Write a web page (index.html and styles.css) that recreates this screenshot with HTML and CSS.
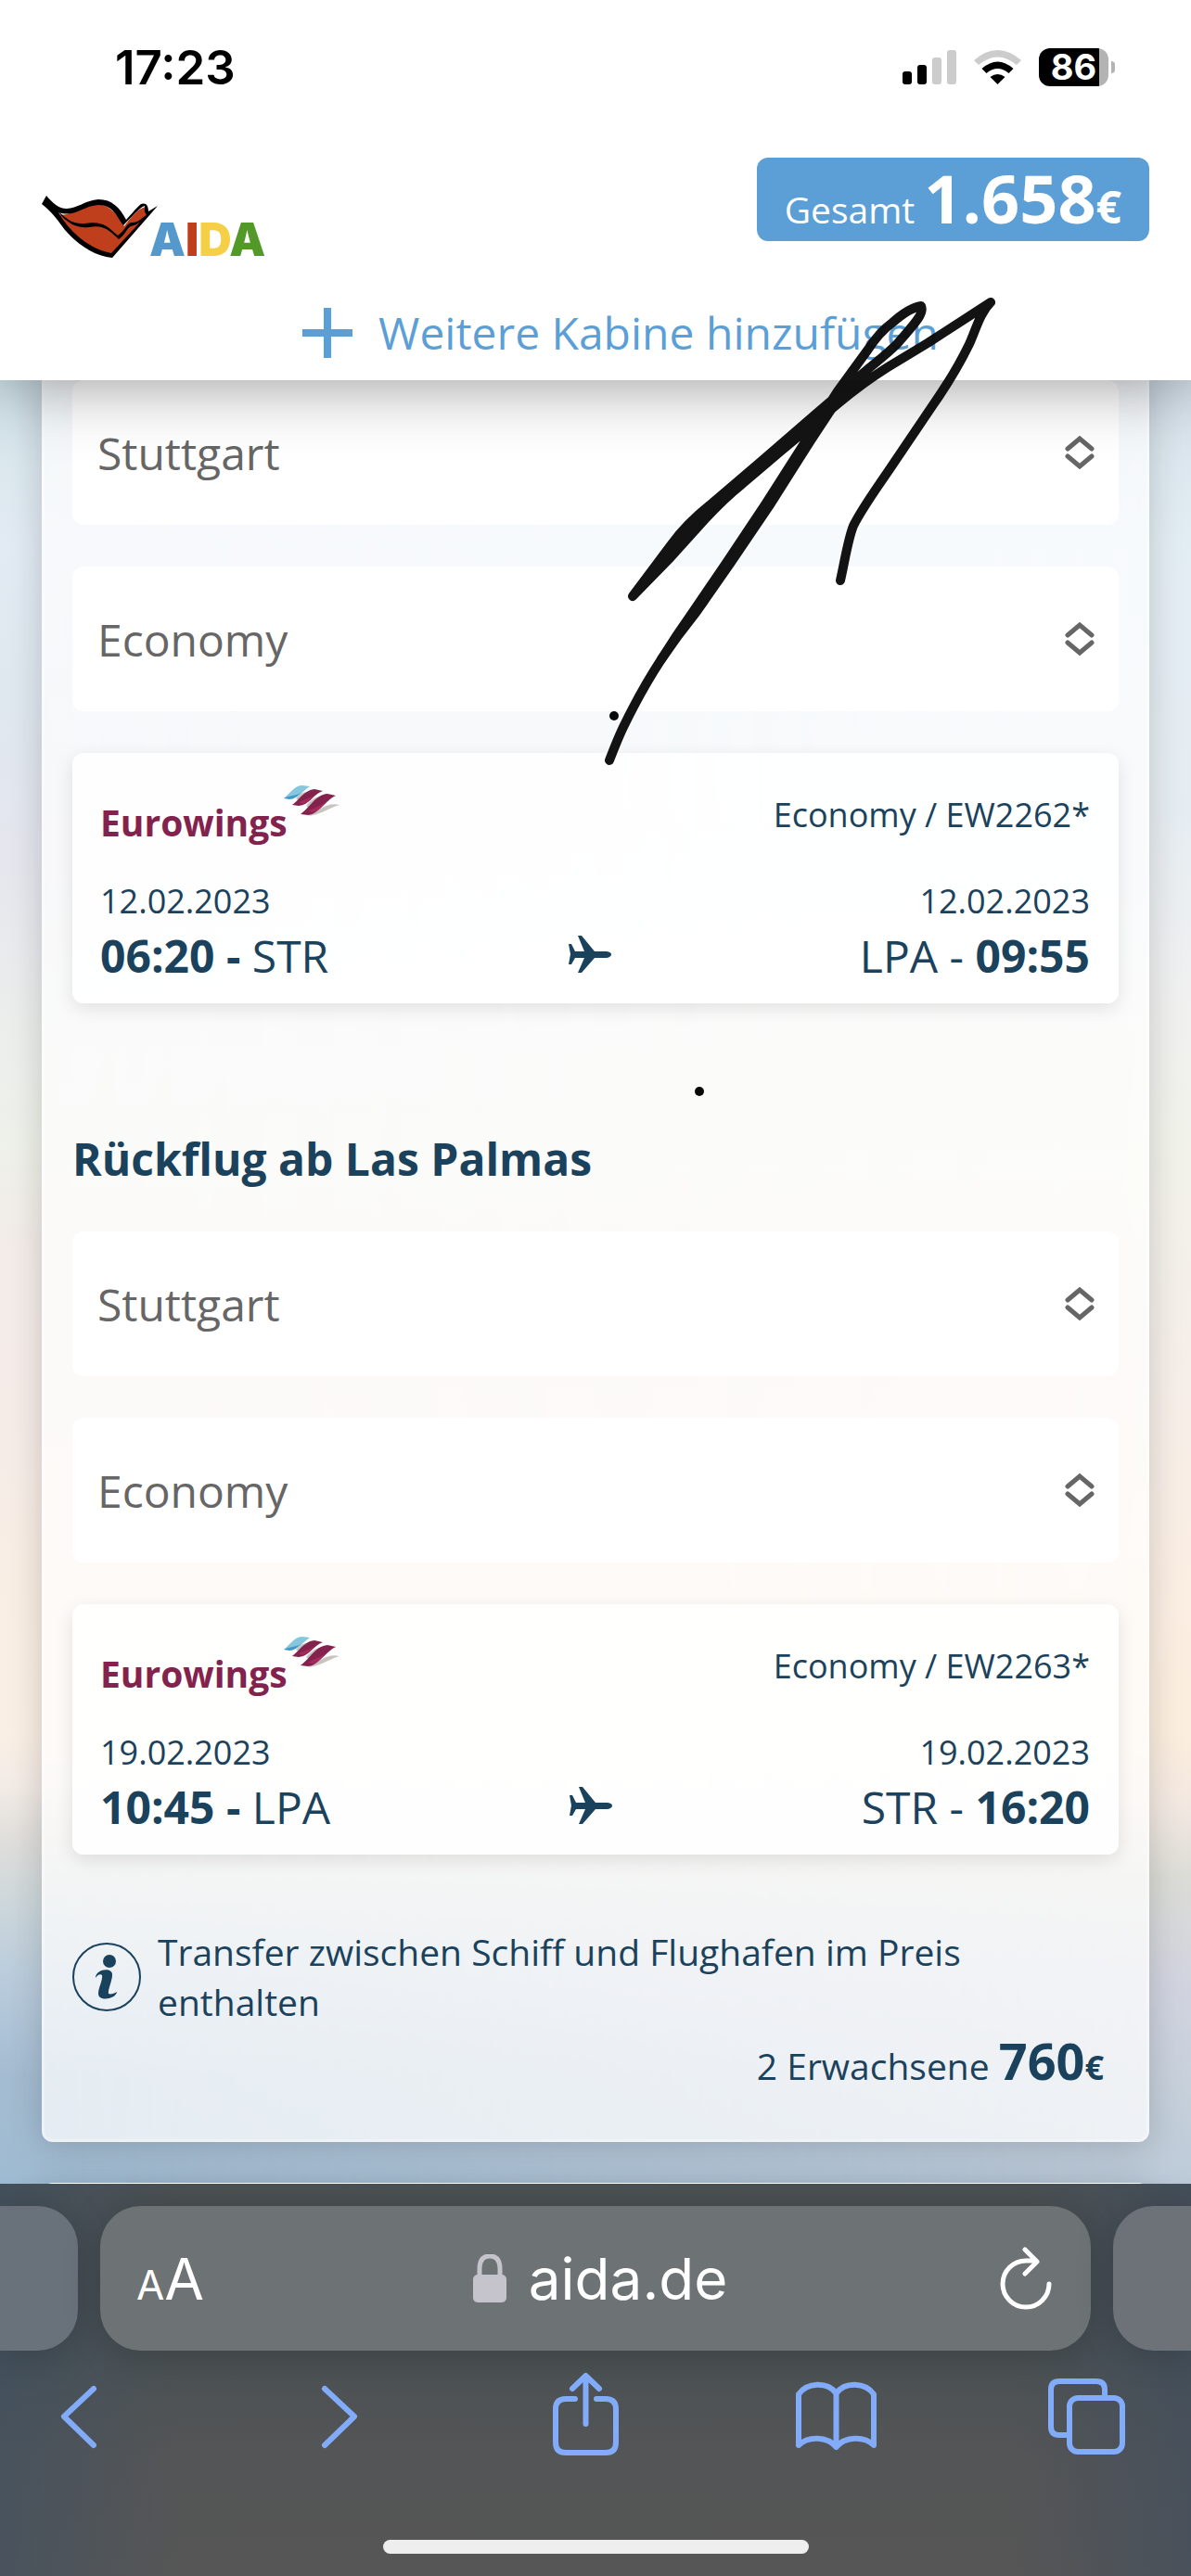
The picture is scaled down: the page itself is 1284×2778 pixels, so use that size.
FILE: index.html
```html
<!DOCTYPE html>
<html lang="de">
<head>
    <meta charset="UTF-8">
    <meta name="viewport" content="width=device-width, initial-scale=1.0">
    <title>AIDA - Flugauswahl</title>
    <link rel="stylesheet" href="styles.css">
</head>
<body>
    <header class="header">
        <div class="status-bar">
            <span class="time">17:23</span>
            <div class="status-icons">
                <svg width="58" height="37" viewBox="0 0 58 37">
                    <rect x="0" y="23" width="10" height="14" rx="3"/>
                    <rect x="16" y="16" width="10" height="21" rx="3"/>
                    <rect x="32" y="8" width="10" height="29" rx="3" fill="#ccc"/>
                    <rect x="48" y="0" width="10" height="37" rx="3" fill="#ccc"/>
                </svg>
                <svg width="51" height="37" viewBox="0 0 51 37">
                    <path d="M0 11 Q25.500 -11 51 11 L46 16 Q25.500 -1 5 16 Z" fill="#ccc"/>
                    <path d="M8.500 20 Q25.500 5 42.500 20 L37.500 25 Q25.500 15 13.500 25 Z"/>
                    <path d="M17.500 29 Q25.500 23 33.500 29 L25.500 37 Z"/>
                </svg>
                <div class="battery"><span class="battery-level">86</span><span class="battery-cap"></span></div>
            </div>
        </div>

        <div class="brand-row">
            <a class="logo" href="#" aria-label="AIDA">
                <svg width="126" height="68" viewBox="0 0 126 68">
                    <path d="M2 8 C18 30 30 18 44 13 C66 2 79 16 89 33 C97 22 104 14 112 12 L114 19 L123 12 C107 31 90 51 76 65 C50 60 26 36 2 8 Z" fill="#bf3f1d"/>
                    <path d="M5 0 L0 9 C12 18 18 28 25 37 C38 52 56 65 76 67 L125 11 L115 17 C115 10 112 7 107 9 C101 14 95 22 91 26 C84 13 76 4 61 4 C47 5 38 14 27 14 C18 14 12 8 5 0 Z M18 18 C36 24 44 11 61 10 C77 10 81 23 88 32 C98 22 105 13 111 11 C111 15 110 17 113 21 L75 62 C50 57 30 39 18 18 Z" fill-rule="evenodd"/>
                    <path d="M14 13 C26 25 33 31 46 30 C65 27 70 32 82 43 C89 38 91 31 96 29 C104 30 109 23 115 19 C110 25 104 32 96 33 C91 36 91 41 83 47 C72 36 65 31 51 34 C34 36 24 26 14 13 Z"/>
                </svg>
                <span class="logo-text"><span class="blue">A</span><span class="red">I</span><span class="yellow">D</span><span class="green">A</span></span>
            </a>
            <div class="total">Gesamt <span class="total-amount">1.658</span><span class="total-currency">€</span></div>
        </div>

        <a class="add-cabin" href="#">
            <svg width="54" height="54" viewBox="0 0 54 54" stroke="#5b9fd6" stroke-width="8">
                <path d="M27 0 V54 M0 27 H54"/>
            </svg>
            Weitere Kabine hinzufügen
        </a>
    </header>

    <main class="content">
        <section class="panel">
            <div class="select-box">
                <select aria-label="Abflughafen Hinflug"><option>Stuttgart</option></select>
                <svg class="arrows" width="32" height="36" viewBox="0 0 32 36"><path d="M3 14 L16 3 L29 14 M3 22 L16 33 L29 22"/></svg>
            </div>
            <div class="select-box">
                <select aria-label="Klasse Hinflug"><option>Economy</option></select>
                <svg class="arrows" width="32" height="36" viewBox="0 0 32 36"><path d="M3 14 L16 3 L29 14 M3 22 L16 33 L29 22"/></svg>
            </div>
            <article class="flight">
                <div class="flight-top">
                    <div class="airline">
                        <span>Eurowings</span>
                        <svg width="60" height="34" viewBox="0 0 60 34">
                            <path d="M13 14 C20 5 28 7 35 6 L20 20 Z M24 22 C34 10 40 12 48 10 L30 27 Z M26 33 C42 23 49 18 60 21 C47 25 39 32 26 33 Z" fill="#c8c4c0"/>
                            <path d="M0 14 C7 8 12 0 20 0 L28 1 C19 7 17 13 8 14 Z" fill="#86c7de"/>
                            <path d="M0 14 C7 10 12 12 18 8 C14 12 11 15 6 15 Z" fill="#4199c9"/>
                            <path d="M9 21 C16 16 22 5 33 4 L42 6 C31 10 28 21 16 22 Z M18 31 C28 24 34 10 47 9 L56 11 C45 16 36 32 26 32 Z" fill="#83234d"/>
                            <path d="M16 18 C23 15 31 13 37 8 C31 12 27 19 20 20 Z M26 28 C34 23 43 21 50 15 C43 20 37 29 31 29 Z" fill="#a52a5c"/>
                        </svg>
                    </div>
                    <span class="small">Economy / EW2262*</span>
                </div>
                <div class="flight-row small"><span>12.02.2023</span><span>12.02.2023</span></div>
                <div class="flight-row times">
                    <span><b>06:20 -</b> STR</span>
                    <svg width="56" height="46" viewBox="0 0 56 46"><path d="M0 10 H3 L7 18 H17 L10 1 H14 L28 18 H41 Q46 19 46 21 Q46 24 41 25 H28 L14 41 H10 L17 25 H7 L3 32 H0 L2 21 Z"/></svg>
                    <span>LPA - <b>09:55</b></span>
                </div>
            </article>

            <h2>Rückflug ab Las Palmas</h2>
            <div class="select-box">
                <select aria-label="Zielflughafen Rückflug"><option>Stuttgart</option></select>
                <svg class="arrows" width="32" height="36" viewBox="0 0 32 36"><path d="M3 14 L16 3 L29 14 M3 22 L16 33 L29 22"/></svg>
            </div>
            <div class="select-box">
                <select aria-label="Klasse Rückflug"><option>Economy</option></select>
                <svg class="arrows" width="32" height="36" viewBox="0 0 32 36"><path d="M3 14 L16 3 L29 14 M3 22 L16 33 L29 22"/></svg>
            </div>
            <article class="flight">
                <div class="flight-top">
                    <div class="airline">
                        <span>Eurowings</span>
                        <svg width="60" height="34" viewBox="0 0 60 34">
                            <path d="M13 14 C20 5 28 7 35 6 L20 20 Z M24 22 C34 10 40 12 48 10 L30 27 Z M26 33 C42 23 49 18 60 21 C47 25 39 32 26 33 Z" fill="#c8c4c0"/>
                            <path d="M0 14 C7 8 12 0 20 0 L28 1 C19 7 17 13 8 14 Z" fill="#86c7de"/>
                            <path d="M0 14 C7 10 12 12 18 8 C14 12 11 15 6 15 Z" fill="#4199c9"/>
                            <path d="M9 21 C16 16 22 5 33 4 L42 6 C31 10 28 21 16 22 Z M18 31 C28 24 34 10 47 9 L56 11 C45 16 36 32 26 32 Z" fill="#83234d"/>
                            <path d="M16 18 C23 15 31 13 37 8 C31 12 27 19 20 20 Z M26 28 C34 23 43 21 50 15 C43 20 37 29 31 29 Z" fill="#a52a5c"/>
                        </svg>
                    </div>
                    <span class="small">Economy / EW2263*</span>
                </div>
                <div class="flight-row small"><span>19.02.2023</span><span>19.02.2023</span></div>
                <div class="flight-row times">
                    <span><b>10:45 -</b> LPA</span>
                    <svg width="56" height="46" viewBox="0 0 56 46"><path d="M0 10 H3 L7 18 H17 L10 1 H14 L28 18 H41 Q46 19 46 21 Q46 24 41 25 H28 L14 41 H10 L17 25 H7 L3 32 H0 L2 21 Z"/></svg>
                    <span>STR - <b>16:20</b></span>
                </div>
            </article>

            <div class="info">
                <svg width="74" height="74" viewBox="0 0 74 74">
                    <circle cx="37" cy="37" r="36" fill="none" stroke="#1b425c" stroke-width="2"/>
                    <circle cx="40" cy="20" r="7"/>
                    <path d="M25 38 C25 28 44 26 43 35 C43 41 38 51 39 55 C41 56 45 55 48 53 C47 61 28 64 28 55 C28 49 33 40 32 35 C30 33 27 35 25 38 Z"/>
                </svg>
                <p>Transfer zwischen Schiff und Flughafen im Preis enthalten</p>
            </div>
            <div class="price">2 Erwachsene <span class="amount">760</span><span class="currency">€</span></div>
        </section>
        <section class="panel panel-next"></section>
    </main>

    <footer class="toolbar">
        <div class="tabs">
            <div class="tab tab-left"></div>
            <div class="tab address">
                <button class="text-size" aria-label="Textgröße"><span>A</span>A</button>
                <div class="domain">
                    <svg width="36" height="52" viewBox="0 0 36 52">
                        <rect x="0" y="22" width="36" height="30" rx="5" fill="#c5c4cd"/>
                        <path d="M7 25 V16 Q7 2 18 2 Q29 2 29 16 V25" fill="none" stroke="#c5c4cd" stroke-width="5"/>
                    </svg>
                    <span>aida.de</span>
                </div>
                <button aria-label="Neu laden">
                    <svg width="56" height="68" viewBox="0 0 56 68" fill="none" stroke="#fff" stroke-width="5" stroke-linecap="round" stroke-linejoin="round">
                        <path d="M53 40 A25 25 0 1 1 28 15 H39 M27 3 L40 16 L27 29"/>
                    </svg>
                </button>
            </div>
            <div class="tab tab-right"></div>
        </div>
        <nav class="nav">
            <button aria-label="Zurück"><svg viewBox="0 0 100 100"><path d="M66 21 L34 51 L66 82"/></svg></button>
            <button aria-label="Vor"><svg viewBox="0 0 100 100"><path d="M43 21 L75 51 L43 82"/></svg></button>
            <button aria-label="Teilen"><svg viewBox="0 0 100 100"><path d="M41 32 H31 Q20 32 20 43 V79 Q20 90 31 90 H74 Q85 90 85 79 V43 Q85 32 74 32 H64 M52.500 59 V8 M38 21 L52.500 7 L67 21"/></svg></button>
            <button aria-label="Lesezeichen"><svg viewBox="0 0 100 100"><path d="M11 82 V27 C20 14 42 13 51.500 26 C61 13 83 14 92 27 V82 C82 72 61 72 51.500 84 C42 72 21 72 11 82 M51.500 26 V84"/></svg></button>
            <button aria-label="Tabs"><svg viewBox="0 0 100 100"><rect x="31" y="31" width="57" height="58" rx="9"/><path d="M29 71 H20 Q11 71 11 62 V22 Q11 13 20 13 H60 Q69 13 69 22 V30"/></svg></button>
        </nav>
        <div class="home-indicator"></div>
    </footer>

    <!-- hand drawn marking -->
    <svg class="scribble" width="430" height="880" viewBox="650 310 430 880">
        <path d="M657 820 C662 807 667 794 673 782 Q692 743 713 711 Q730 684 747 660 L783 607 L825 544 L871 472 L903 422 L935 378 Q948 358 962 348 Q980 332 993 330 C997 338 985 350 967 371 C951 387 940 393 922 410 L880 446 L820 498 L765 545 Q740 565 724 587 L682 643 L723 601 L760 560 Q780 538 800 522 L840 488 L905 434 Q930 413 957 396 L1000 370 L1068 326 C1056 338 1052 356 1045 371 Q1030 402 1007 435 L957 509 C940 534 929 549 920 567 C914 582 911 604 906 626"/>
        <path d="M713 711 Q730 686 750 661 L787 608 L829 546 L874 475 L905 428 M765 548 L820 503 L880 451 L912 422"/>
        <circle cx="662" cy="772" r="5"/>
        <circle cx="754" cy="1177" r="5"/>
    </svg>
</body>
</html>
```
FILE: styles.css
```css
* {
    box-sizing: border-box;
}
body {
    font-family: "Open Sans", sans-serif;
    margin: 0;
    height: 100vh;
    display: flex;
    flex-direction: column;
    position: relative;
    overflow: hidden;
    color: #1b425c;
}
button {
    padding: 0;
    border: none;
    background: none;
    color: white;
    cursor: pointer;
}
svg {
    display: block;
    flex-shrink: 0;
}
a {
    text-decoration: none;
}

/* header */
.header {
    background-color: #fff;
    position: relative;
    z-index: 2;
    padding-bottom: 19px;
    flex-shrink: 0;
    box-shadow: 0 0 72px rgba(0, 0, 0, 0.44);
}
.status-bar {
    display: flex;
    justify-content: space-between;
    align-items: center;
    height: 145px;
    padding: 0 82px 0 124px;
    font-family: Inter, sans-serif;
    color: #000;
}
.time {
    font-size: 51px;
    font-weight: 600;
}
.status-icons {
    display: flex;
    align-items: center;
    gap: 19px;
}
.battery {
    display: flex;
    align-items: center;
    gap: 3px;
}
.battery-level {
    width: 75px;
    height: 41px;
    line-height: 41px;
    border-radius: 12px;
    background: linear-gradient(to right, #000 65px, #b3b3b3 65px);
    color: white;
    font-size: 38px;
    font-weight: 700;
    text-align: center;
}
.battery-cap {
    width: 4px;
    height: 13px;
    border-radius: 0 4px 4px 0;
    background-color: #b3b3b3;
}
.brand-row {
    display: flex;
    justify-content: space-between;
    align-items: flex-start;
    padding: 25px 45px 0;
}
.logo {
    display: flex;
    align-items: flex-end;
    margin-top: 41px;
}
.logo-text {
    margin-left: -10px;
    font-family: Inter, sans-serif;
    font-size: 49px;
    font-weight: 900;
    line-height: 41px;
}
.blue { color: #5599cc; }
.red { color: #bf3f1d; }
.yellow { color: #f5cf45; }
.green { color: #53992a; }
.total {
    height: 90px;
    padding: 0 30px;
    line-height: 86px;
    border-radius: 12px;
    background-color: #5b9fd6;
    color: white;
    font-size: 39px;
}
.total-amount {
    font-size: 72px;
    font-weight: bold;
}
.total-currency {
    font-size: 48px;
    font-weight: bold;
}
.add-cabin {
    display: flex;
    justify-content: center;
    align-items: center;
    gap: 28px;
    margin-top: 48px;
    padding-left: 54px;
    color: #5b9fd6;
    font-size: 48px;
    line-height: 64px;
}

/* flight selection */
.content {
    flex: 1;
    min-height: 0;
    overflow: hidden;
    position: relative;
    padding: 0 45px;
    background: linear-gradient(#cfe1e9, #dce8ee 5%, #e2eaf3 9%, #dfe8ef 17%, #e5e6ee 26%, #eceeec 36%, #eef1ea 42%, #f3ece9 48%, #f5ece8 58%, #f9eee4 67%, #faefe5 75%, #f2ebe6 78%, #dfdedb 81%, #cfd8db 84%, #b8cbdc 89%, #a4bcd1 94%, #9fbbd2);
}
/* lighter right hand side of the sky */
.content::before {
    content: "";
    position: absolute;
    inset: 0;
    background: linear-gradient(#d5e0ea, #e2edf3 9%, #e6edf2 24%, #f0f0f0 34%, #f1f2ea 42%, #f6eee8 56%, #fbeee2 68%, #fbeedd 75%, #f3e8e1 79%, #dbdcd6 83%, #d1d3df 89%, #c8d1db 94%, #bccad8);
    mask-image: linear-gradient(to right, transparent, #000);
}
.panel {
    position: relative;
    padding: 0 30px 49px;
    border: 3px solid rgba(255, 255, 255, 0.3);
    border-top: none;
    border-radius: 0 0 12px 12px;
    background-color: rgba(255, 255, 255, 0.72);
    box-shadow: 0 4px 36px rgba(0, 0, 0, 0.18);
}
.panel-next {
    margin-top: 44px;
    border-top: 3px solid #fff;
    border-radius: 12px;
}
.select-box {
    position: relative;
    margin-bottom: 45px;
}
.select-box select {
    display: block;
    width: 100%;
    height: 156px;
    padding: 0 27px;
    border: none;
    border-radius: 12px;
    background-color: #fff;
    color: #666;
    font-family: inherit;
    font-size: 48px;
    appearance: none;
}
.arrows {
    position: absolute;
    right: 26px;
    top: 60px;
    fill: none;
    stroke: #666;
    stroke-width: 5;
    stroke-linecap: round;
}
.flight {
    padding: 35px 31px 19px 30px;
    border-radius: 12px;
    background-color: rgba(255, 255, 255, 0.85);
    box-shadow: 0 6px 20px rgba(0, 0, 0, 0.1);
}
.flight-top {
    display: flex;
    justify-content: space-between;
    align-items: center;
    height: 64px;
    margin-bottom: 34px;
}
.airline {
    display: flex;
    align-items: flex-start;
    height: 64px;
    color: #83234d;
    font-size: 39px;
    font-weight: bold;
}
.airline span {
    margin-right: -4px;
    line-height: 80px;
}
.small {
    font-size: 36px;
    line-height: 54px;
}
.flight-row {
    display: flex;
    justify-content: space-between;
}
.times {
    align-items: center;
    font-size: 48px;
    line-height: 64px;
}
.times svg, .info svg {
    fill: #1b425c;
}
h2 {
    margin: 136px 0 46px;
    font-size: 48px;
    line-height: 64px;
}
.info {
    display: flex;
    align-items: center;
    gap: 18px;
    margin-top: 78px;
}
.info p {
    margin: 0;
    font-size: 39px;
    line-height: 54px;
}
.price {
    height: 72px;
    padding-right: 16px;
    font-size: 39px;
    line-height: 72px;
    text-align: right;
}
.amount {
    font-size: 54px;
    font-weight: bold;
}
.currency {
    font-size: 36px;
    font-weight: bold;
}

/* browser toolbar */
.toolbar {
    position: relative;
    flex-shrink: 0;
    padding: 24px 0;
    background: linear-gradient(to right, rgba(60, 80, 100, 0.5), transparent 15%, transparent 85%, rgba(60, 76, 96, 0.5)), linear-gradient(#4c5153, #4b5153 45%, #545556 70%, #565656);
}
.tabs {
    display: flex;
    gap: 24px;
    height: 156px;
}
.tab {
    background-color: #6d7275;
    box-shadow: 0 4px 40px rgba(0, 0, 0, 0.2);
}
.tab-left {
    width: 84px;
    border-radius: 0 44px 44px 0;
    background-color: #69717a;
}
.tab-right {
    width: 84px;
    border-radius: 44px 0 0 44px;
    background-color: #6d7178;
}
.address {
    flex: 1;
    display: flex;
    justify-content: space-between;
    align-items: center;
    padding: 0 42px 0 39px;
    border-radius: 44px;
    color: white;
    font-family: Inter, sans-serif;
}
.text-size {
    font-family: Inter, sans-serif;
    font-size: 62px;
}
.text-size span {
    font-size: 44px;
}
.domain {
    display: flex;
    align-items: center;
    gap: 24px;
    padding-right: 4px;
    font-size: 62px;
}
.nav {
    display: flex;
    justify-content: space-between;
    padding: 20px 62px 0 35px;
}
.nav svg {
    width: 100px;
    height: 100px;
    fill: none;
    stroke: #82abfa;
    stroke-width: 6;
    stroke-linecap: round;
    stroke-linejoin: round;
}
.home-indicator {
    width: 459px;
    height: 15px;
    margin: 84px auto 0;
    border-radius: 8px;
    background-color: #eee;
}

.scribble {
    position: absolute;
    left: 650px;
    top: 310px;
    z-index: 3;
    pointer-events: none;
    opacity: 0.96;
}
.scribble path {
    fill: none;
    stroke: #0a0a0a;
    stroke-width: 10;
    stroke-linecap: round;
    stroke-linejoin: round;
}
```
